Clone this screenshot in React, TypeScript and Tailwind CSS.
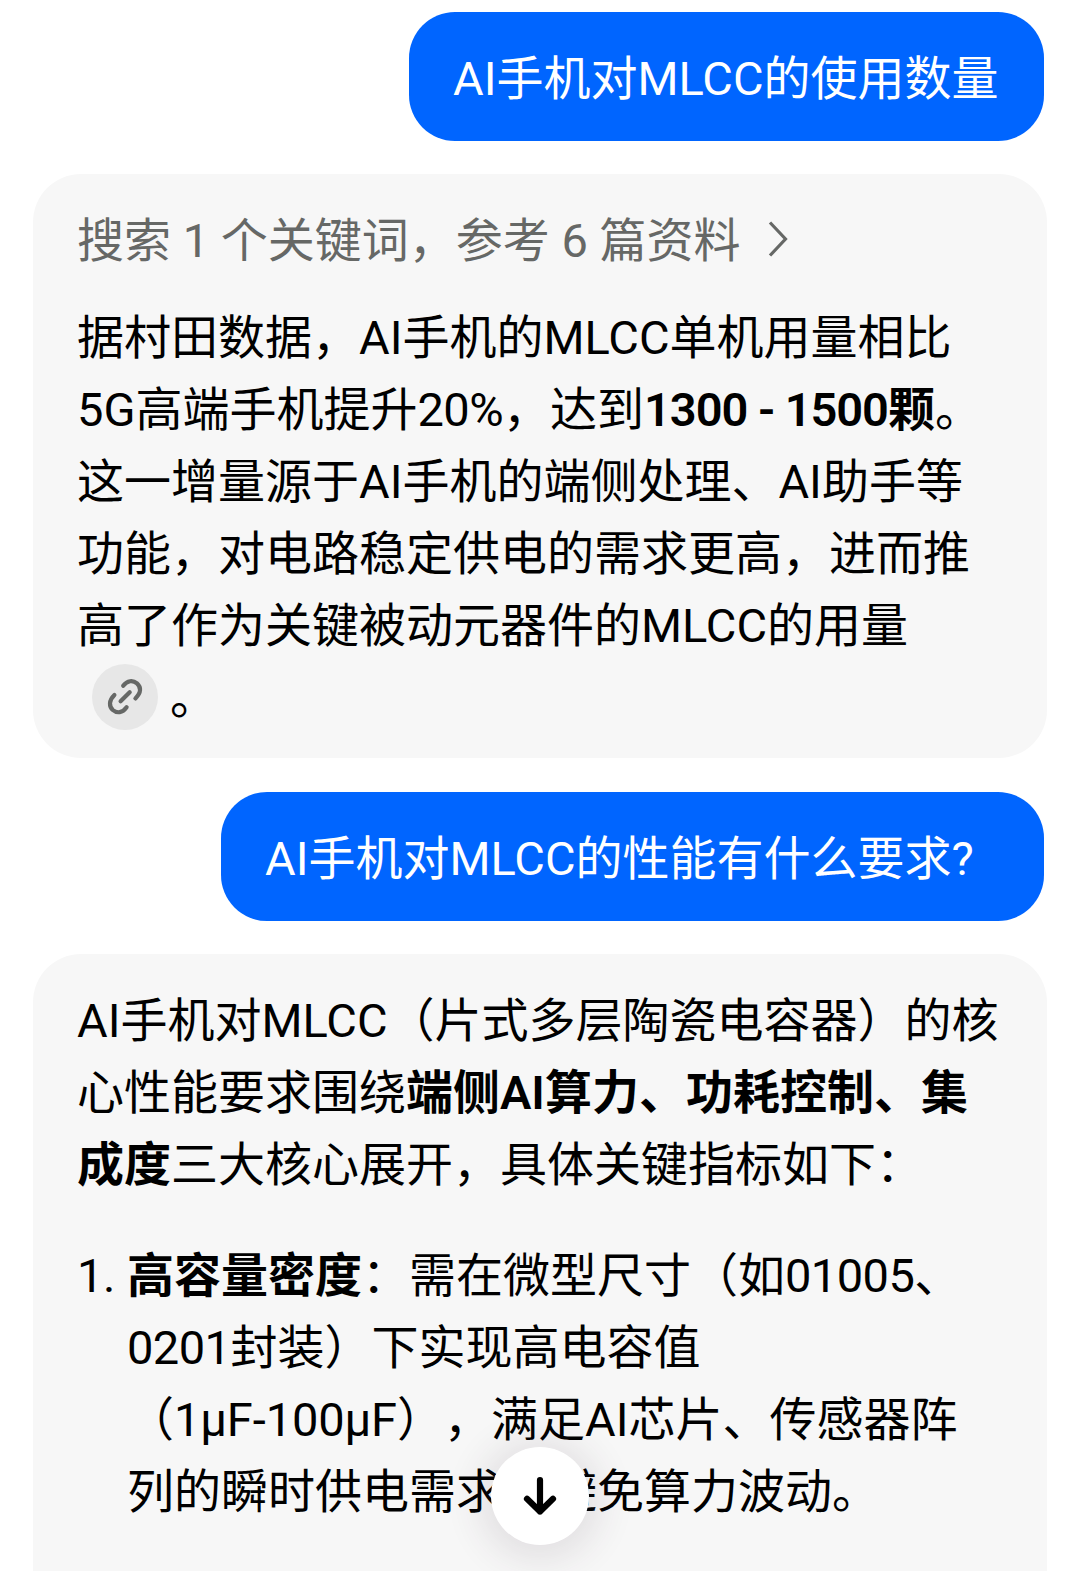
import type { ReactNode } from "react";

function Line({ children, className = "" }: { children: ReactNode; className?: string }) {
  return <div className={`h-[72px] whitespace-nowrap leading-[72px] ${className}`}>{children}</div>;
}

function B({ children }: { children: ReactNode }) {
  return <strong className="font-semibold">{children}</strong>;
}

/* Digits are set slightly tighter than the surrounding text. */
function Num({ children }: { children: ReactNode }) {
  return <span className="tracking-[-0.55px]">{children}</span>;
}

function UserBubble({ children, className }: { children: ReactNode; className: string }) {
  return (
    <div className={`mr-9 h-[128.5px] shrink-0 self-end whitespace-nowrap rounded-[46px] bg-[#0065ff] pl-11 leading-[134px] text-white ${className}`}>
      {children}
    </div>
  );
}

function LinkBadge() {
  return (
    <span className="mb-[2px] ml-[15px] flex size-[66px] items-center justify-center rounded-full bg-[#e7e7e7]">
      <svg viewBox="0 0 66 66" className="size-[66px]" fill="none" stroke="#666866" strokeWidth="4.2" strokeLinecap="round">
        <path d="M31.2 21.8C35.2 16.2 41 16 45 19.4C49.2 23.2 49.4 28.6 43.4 34.4" />
        <path d="M22.4 31C16.6 36.6 17 42.4 20.8 46C25 49.6 30.4 49 34.6 43.2" />
        <path d="M28.6 37.2L37.7 28.2" />
      </svg>
    </span>
  );
}

export default function App() {
  return (
    <div className="relative flex h-[1571px] w-[1080px] flex-col overflow-hidden bg-white pt-3 font-['Roboto','Noto_Sans_CJK_SC',sans-serif] text-[47px] text-black [text-spacing-trim:space-all]" lang="zh-CN">
      <UserBubble className="w-[635px]">AI手机对MLCC的使用数量</UserBubble>

      <section className="mt-[33.5px] ml-[33px] h-[584px] w-[1014px] shrink-0 rounded-[48px] bg-[#f7f7f7] pt-[31px] pl-11">
        <Line className="flex items-center text-[#666866]">
          搜索 1 个关键词，参考 6 篇资料
          <svg viewBox="0 0 20 36" className="mb-1 ml-[28px] h-9 w-5" fill="none" stroke="#666866" strokeWidth="3.2">
            <path d="M2 1.5L17.5 18L2 34.5" />
          </svg>
        </Line>
        <div className="mt-[25px]">
          <Line>据村田数据，AI手机的MLCC单机用量相比</Line>
          <Line>5G高端手机提升<Num>20%</Num>，达到<B><span className="tracking-[-1.05px]">1300 - 1500</span>颗</B>。</Line>
          <Line>这一增量源于AI手机的端侧处理、AI助手等</Line>
          <Line>功能，对电路稳定供电的需求更高，进而推</Line>
          <Line>高了作为关键被动元器件的MLCC的用量</Line>
          <Line className="flex items-center">
            <LinkBadge />
            <span className="ml-[12px]">。</span>
          </Line>
        </div>
      </section>

      <UserBubble className="mt-[34px] w-[823px]">AI手机对MLCC的性能有什么要求?</UserBubble>

      <section className="mt-[33.5px] ml-[33px] h-[680px] w-[1014px] shrink-0 rounded-t-[48px] bg-[#f7f7f7] pt-[31px] pl-11">
        <Line>AI手机对MLCC（片式多层陶瓷电容器）的核</Line>
        <Line>心性能要求围绕<B>端侧AI算力、功耗控制、集</B></Line>
        <Line><B>成度</B>三大核心展开，具体关键指标如下：</Line>
        <div className="mt-[39px] flex">
          <Line className="w-[50px] tracking-[-0.5px]">1.</Line>
          <div>
            <Line><B>高容量密度</B>：需在微型尺寸（如<Num>01005</Num>、</Line>
            <Line><Num>0201</Num>封装）下实现高电容值</Line>
            <Line>（<span className="tracking-[-0.1px]">1μF-100μF</span>），满足AI芯片、传感器阵</Line>
            <Line>列的瞬时供电需求，避免算力波动。</Line>
          </div>
        </div>
      </section>

      <button className="absolute top-[1447px] left-[491px] flex size-[98px] items-center justify-center rounded-full bg-white shadow-[0_4px_36px_12px_rgba(60,45,60,0.11)]">
        <svg viewBox="0 0 36 42" className="h-[42px] w-9" fill="none" stroke="#000" strokeWidth="6.2" strokeLinecap="round" strokeLinejoin="round">
          <path d="M18 5V36.5M5 23.8L18 36.5L31 23.8" />
        </svg>
      </button>
    </div>
  );
}
